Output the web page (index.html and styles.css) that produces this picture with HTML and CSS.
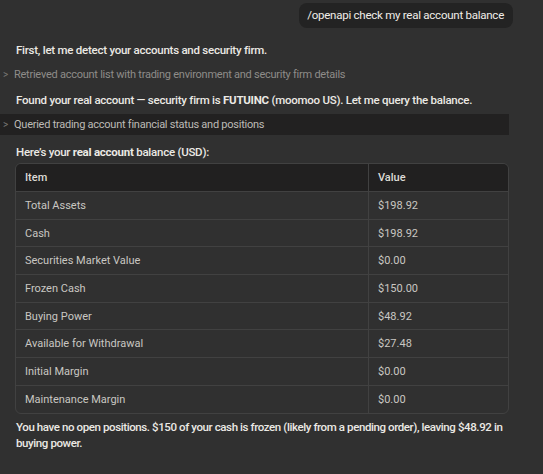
FILE: index.html
```html
<!DOCTYPE html>
<html lang="en">
<head>
  <meta charset="UTF-8">
  <title>Account Balance</title>
  <meta name="viewport" content="width=device-width, initial-scale=1.0">
  <link rel="stylesheet" href="styles.css">
</head>
<body>
<div id="chat">
  <div class="user-row">
    <div class="bubble">/openapi check my real account balance</div>
  </div>

  <div class="thread">
    <p class="msg">First, let me detect your accounts and security firm.</p>
    <div class="step"><span class="chev">&gt;</span>Retrieved account list with trading environment and security firm details</div>

    <p class="msg">Found your real account — security firm is <b>FUTUINC</b> (moomoo US). Let me query the balance.</p>
    <div class="step open"><span class="chev">&gt;</span>Queried trading account financial status and positions</div>

    <p class="msg">Here’s your <b>real account</b> balance (USD):</p>

    <div class="table-wrap">
      <table class="balance">
        <thead>
          <tr><th>Item</th><th>Value</th></tr>
        </thead>
        <tbody>
          <tr><td>Total Assets</td><td>$198.92</td></tr>
          <tr><td>Cash</td><td>$198.92</td></tr>
          <tr><td>Securities Market Value</td><td>$0.00</td></tr>
          <tr><td>Frozen Cash</td><td>$150.00</td></tr>
          <tr><td>Buying Power</td><td>$48.92</td></tr>
          <tr><td>Available for Withdrawal</td><td>$27.48</td></tr>
          <tr><td>Initial Margin</td><td>$0.00</td></tr>
          <tr><td>Maintenance Margin</td><td>$0.00</td></tr>
        </tbody>
      </table>
    </div>

    <p class="msg summary">You have no open positions. $150 of your cash is frozen (likely from a pending order), leaving $48.92 in buying power.</p>
  </div>
</div>
</body>
</html>
```

FILE: styles.css
```css
body, html {
  margin: 0;
  padding: 0;
  height: 100%;
  background-color: #303030;
  color: #ebe9e4;
  font-family: 'Roboto', sans-serif;
  font-size: 11.5px;
  letter-spacing: -0.25px;
  overflow: hidden;
}
#chat {
  padding-top: 3px;
}
.thread {
  width: 509px;
}
.user-row {
  display: flex;
  justify-content: flex-end;
  padding-right: 30px;
  margin-bottom: 14px;
}
.bubble {
  background: #232323;
  border-radius: 8px;
  padding: 0 9px 0 8px;
  height: 25px;
  line-height: 25px;
  color: #f0eee9;
}
.msg {
  margin: 0;
  padding-left: 16px;
  line-height: 16px;
  font-weight: 500;
}
.msg b {
  font-weight: 700;
}
/* collapsed tool-call lines */
.step {
  display: flex;
  align-items: center;
  height: 21px;
  margin: 6px 0 7px;
  color: #8e8c89;
  font-size: 11px;
}
.step.open {
  background: #222121;
  color: #bdbbb6;
  margin: 6px 0 9px;
}
.chev {
  width: 14px;
  padding-left: 3px;
  box-sizing: border-box;
  color: #7a7875;
  font-size: 10px;
}
.table-wrap {
  margin: 3px 0 0 15px;
  border: 1px solid #414141;
  border-radius: 6px;
  overflow: hidden;
}
.balance {
  width: 100%;
  border-collapse: collapse;
  font-size: 11px;
  letter-spacing: 0;
  color: #c9c7c2;
}
.balance th {
  background: #212020;
  color: #dddbd6;
  font-weight: 500;
  text-align: left;
  height: 27px;
  padding: 0 9px;
}
.balance td {
  height: 26.7px;
  padding: 0 9px;
  border-top: 1px solid #414141;
}
.balance th:first-child, .balance td:first-child {
  width: 334px;
  border-right: 1px solid #414141;
}
.summary {
  margin-top: 5px;
  letter-spacing: -0.4px;
}
```
